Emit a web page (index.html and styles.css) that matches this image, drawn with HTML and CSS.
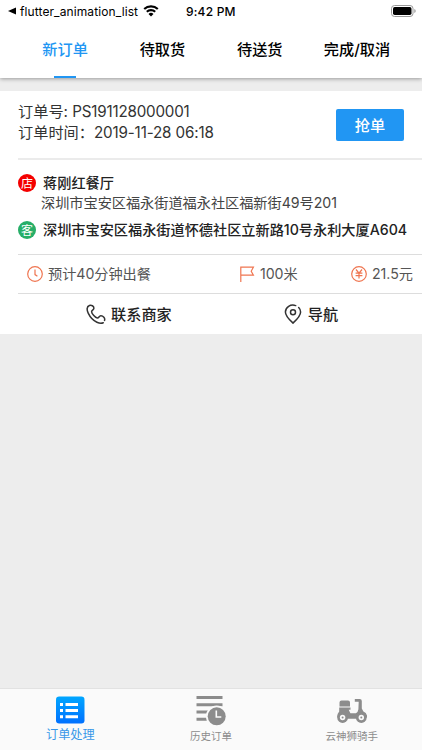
FILE: index.html
```html
<!DOCTYPE html>
<html lang="zh-CN">
<head>
<meta charset="utf-8">
<meta name="viewport" content="width=device-width, initial-scale=1">
<title>订单处理</title>
<link rel="stylesheet" href="styles.css">
</head>
<body>
<div class="app">
  <header class="top">
    <div class="status">
      <div class="status-left">
        <svg class="back" viewBox="0 0 8 8"><path d="M8 .4v7.2L0 4z"/></svg>
        <span class="source">flutter_animation_list</span>
        <svg class="wifi" viewBox="0 0 16 12"><path d="M1.2 4.1a9.8 9.8 0 0 1 13.6 0M3.8 6.8a6.1 6.1 0 0 1 8.4 0" fill="none" stroke="#000" stroke-width="2.1"/><path d="M8 11.6 5.5 9a3.6 3.6 0 0 1 5 0z"/></svg>
      </div>
      <span class="time">9:42 PM</span>
      <svg class="battery" viewBox="0 0 25 12"><rect x=".5" y=".5" width="21.5" height="11" rx="3" fill="#fff" stroke="#999"/><rect x="2" y="2" width="18.5" height="8" rx="1.7"/><path d="M23.3 4v4q1.4-.7 1.4-2t-1.4-2" fill="#999"/></svg>
    </div>
    <nav class="tabs">
      <a class="tab active">新订单</a>
      <a class="tab">待取货</a>
      <a class="tab">待送货</a>
      <a class="tab">完成/取消</a>
    </nav>
  </header>

  <main class="content">
    <article class="card">
      <section class="order">
        <div class="order-info">
          <div class="order-no">订单号: <span>PS191128000001</span></div>
          <div class="order-time">订单时间：<span>2019-11-28 06:18</span></div>
        </div>
        <button class="grab">抢单</button>
      </section>
      <section class="places">
        <div class="place"><i class="badge shop">店</i><span class="shop-name">蒋刚红餐厅</span></div>
        <div class="shop-address">深圳市宝安区福永街道福永社区福新街49号201</div>
        <div class="place customer"><i class="badge guest">客</i><span class="guest-address">深圳市宝安区福永街道怀德社区立新路10号永利大厦A604</span></div>
      </section>
      <section class="facts">
        <div class="fact eta">
          <svg viewBox="0 0 16 16"><circle cx="8" cy="8" r="7.3"/><path d="M8 3.6v5l2.4 1.7"/></svg>
          <span>预计40分钟出餐</span>
        </div>
        <div class="fact distance">
          <svg viewBox="0 0 16 16"><path d="M1.8 16V1.2h12.6l-2.2 4 2.2 4H1.8"/></svg>
          <span>100米</span>
        </div>
        <div class="fact price">
          <svg viewBox="0 0 16 16"><circle cx="8" cy="8" r="7.3"/><path d="m5 3.5 3 3.7 3-3.7M8 7.2v5.3M4.6 7.2h6.8M4.6 9.7h6.8"/></svg>
          <span>21.5元</span>
        </div>
      </section>
      <section class="actions">
        <a class="action call">
          <svg viewBox="0 0 20 20"><path d="M3.4 1.5C.5 2.5.7 6.1 2.2 9.2c1.8 3.8 5 7.4 8.7 9 2.3 1 4.7 1.2 6.4.5M3.4 1.5c1.900-.7 4.600.5 4.500 2.800-.1 1.700-2.400 2-2.300 3.500.1 2 3.800 5.900 5.700 6.200 1.600.2 1.700-2.200 3.500-2.300 2.300-.1 4.600 2.400 3.700 4.700"/></svg>
          <span>联系商家</span>
        </a>
        <a class="action route">
          <svg viewBox="0 0 20 20"><path d="M12.7 1.6C7.6-.2 2.400 3.200 2.400 8.100c0 4.300 3.900 7.700 7.600 11 3.700-3.300 7.600-6.700 7.600-11 0-1.800-.7-3.400-1.900-4.600"/><circle cx="10" cy="8.3" r="2.5"/></svg>
          <span>导航</span>
        </a>
      </section>
    </article>
  </main>

  <footer class="bottom">
    <a class="item current">
      <svg viewBox="0 0 30 30"><defs><linearGradient id="blue" x2="0" y2="1"><stop stop-color="#00a6ff"/><stop offset="1" stop-color="#0070ff"/></linearGradient></defs><rect x="1" y=".5" width="28.5" height="27" rx="3.2" fill="url(#blue)"/><path fill="#fff" d="M5 7h3v3H5zM5 13h3v3H5zM5 19.300h3v3H5zM10.500 7H23v3H10.500zM10.500 13H23v3H10.500zM10.500 19.300H23v3H10.500z"/></svg>
      <span>订单处理</span>
    </a>
    <a class="item">
      <svg viewBox="0 0 30 30"><path d="M.5 0h26v3H.5zM.5 7.300h26v3H.5zM.5 14.600h13v3H.5zM.5 21.800h11v3H.5z"/><circle cx="20.700" cy="20.300" r="10.800" fill="#fafafa"/><circle cx="20.700" cy="20.300" r="9"/><path d="M20.300 14.500v6.500h5" fill="none" stroke="#fafafa" stroke-width="1.600"/></svg>
      <span>历史订单</span>
    </a>
    <a class="item">
      <svg viewBox="0 0 30 30"><path d="M4.500 4.500h6.500q2 0 2 2v4H2.500v-4q0-2 2-2M2.200 11.600h11.300v2.200h-1.800l1.700 3.400h5.500q2.200-1.200 2.500-4l.3-7.500h-3.900V3h5q2 0 2 2v7.500l1.600 3q3.800 1.500 3.800 6h-9.700l-.8 1.300H10L.2 21q0-3.500 2-5.500z"/><circle cx="5.600" cy="21.500" r="5.400"/><circle cx="24.300" cy="21.500" r="5.400"/><g fill="#fafafa"><circle cx="5.600" cy="21.500" r="2.700"/><circle cx="24.300" cy="21.500" r="2.700"/></g><circle cx="5.600" cy="21.500" r="1"/><circle cx="24.300" cy="21.500" r="1"/></svg>
      <span>云神狮骑手</span>
    </a>
  </footer>
</div>
</body>
</html>
```

FILE: styles.css
```css
* { box-sizing: border-box; }
body { margin: 0; font-family: Inter, "Noto Sans CJK SC", sans-serif; color: #222; }
svg { display: block; flex: none; }
span { white-space: nowrap; }

.app { display: flex; flex-direction: column; width: 422px; height: 750px; overflow: hidden; background: #ededed; }
.top { flex: none; height: 78px; background: #fff; box-shadow: 0 1px 4px rgba(0,0,0,.35); z-index: 1; }

.status { display: grid; grid-template-columns: 178px 1fr auto; align-items: center; height: 22px; padding: 0 5px 0 8px; color: #000; }
.status-left { display: flex; align-items: center; }
.back { width: 8px; height: 8px; margin-right: 4px; }
.source { font-size: 12px; letter-spacing: .1px; }
.wifi { width: 16px; height: 12px; margin: -1px 0 0 5px; }
.time { font-size: 12px; font-weight: 500; letter-spacing: .2px; }
.battery { width: 25px; height: 12px; margin-right: 1px; }

.tabs { display: grid; grid-template-columns: repeat(4, 97.3px); padding-left: 16.5px; height: 56px; }
.tab { display: flex; flex-direction: column; align-items: center; line-height: 56px; font-size: 15.2px; font-weight: 500; white-space: nowrap; color: #000; }
.active { color: #2196f3; }
.active::after { content: ""; flex: none; width: 22px; height: 2px; margin-top: -2px; background: #2196f3; }

.content { flex: 1; padding-top: 13px; }
.card { height: 243px; background: #fff; }
.order { display: flex; justify-content: space-between; height: 69px; margin-left: 18px; padding: 10px 18px 0 0; border-bottom: 2px solid #ebebeb; }
.order-info { font-size: 15.2px; line-height: 21px; color: #333; white-space: nowrap; }
.order-no span { letter-spacing: -.2px; }
.order-time span { letter-spacing: -.15px; }
.grab { width: 68px; height: 32px; margin-top: 8px; padding: 0; border: 0; border-radius: 2px; background: #2196f3; color: #fff; font: 500 15.2px/31px Inter, "Noto Sans CJK SC", sans-serif; }

.places { height: 94px; padding: 13px 0 0 18px; }
.place { display: flex; align-items: center; height: 20px; font-size: 14.2px; font-weight: 500; }
.place span { line-height: 18px; margin-top: -1px; }
.guest-address { letter-spacing: -.02px; }
.badge { display: flex; align-items: center; justify-content: center; width: 18px; height: 18px; margin-right: 7px; border-radius: 50%; color: #fff; font: 400 12px/18px "Noto Sans CJK SC", sans-serif; }
.shop { background: #f40000; }
.guest { background: #27ae68; }
.shop-address { padding-left: 23px; font-size: 14.2px; line-height: 20px; color: #444; white-space: nowrap; letter-spacing: -.03px; }
.customer { margin-top: 7px; }

.facts { display: grid; grid-template-columns: 212px 112px 1fr; align-items: center; height: 40px; margin-left: 18px; padding-left: 9px; border: solid #ddd; border-width: 1px 0; font-size: 14.2px; color: #555; }
.fact { display: flex; align-items: center; gap: 5px; }
.fact span { margin-top: -2px; letter-spacing: -.05px; }
.fact svg { width: 16px; height: 16px; fill: none; stroke: #ef7550; stroke-width: 1.2; }

.actions { display: flex; height: 40px; align-items: center; font-size: 15.2px; font-weight: 500; }
.action { display: flex; align-items: center; gap: 5px; }
.action span { margin-top: -2px; }
.action svg { width: 20px; height: 20px; margin-top: -1px; fill: none; stroke: #333; stroke-width: 1.5; stroke-linecap: round; }
.call { margin-left: 86px; }
.route { margin-left: 111px; }

.bottom { flex: none; display: grid; grid-template-columns: repeat(3, 1fr); height: 62px; border-top: 1px solid #e2e2e2; background: #fafafa; }
.item { display: flex; flex-direction: column; align-items: center; padding-top: 7px; color: #8c8c8c; font-size: 10.5px; }
.item svg { width: 30px; height: 30px; fill: #8c8c8c; }
.item span { line-height: 16px; margin-top: 3px; }
.current { color: #3897e8; font-size: 12.2px; }
.current span { margin-top: 1px; }
```
